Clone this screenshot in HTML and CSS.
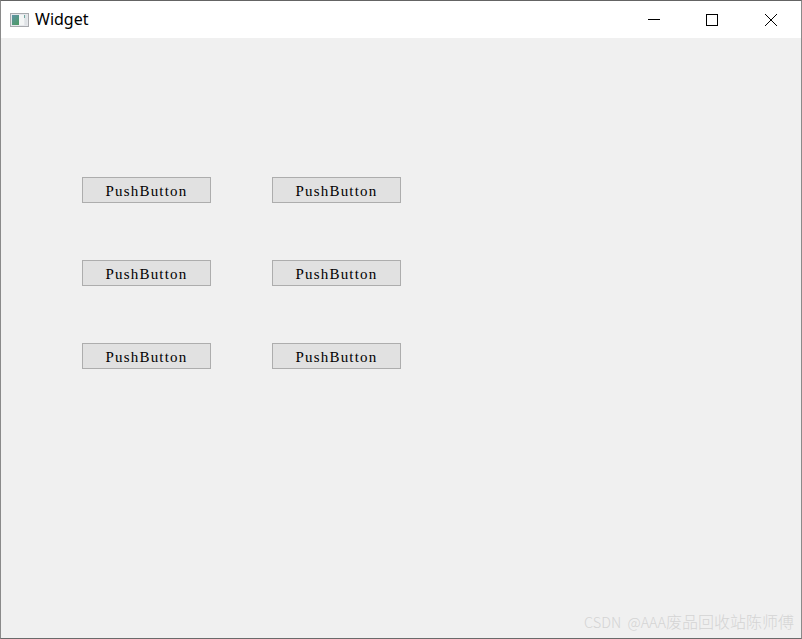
FILE: index.html
```html
<!DOCTYPE html>
<html lang="zh">
<head>
<meta charset="utf-8">
<title>Widget</title>
<link rel="stylesheet" href="styles.css">
</head>
<body>
<div class="window">
  <header class="titlebar">
    <svg class="app-icon" width="20" height="16" viewBox="0 0 20 16">
      <defs>
        <linearGradient id="g" x1="0" y1="0" x2="0.6" y2="1">
          <stop offset="0" stop-color="#5f93a6"/>
          <stop offset="1" stop-color="#4f9a6c"/>
        </linearGradient>
      </defs>
      <rect x="0.5" y="1.5" width="18" height="13" fill="#e6e8ec" stroke="#a8aaae"/>
      <rect x="2" y="3" width="7" height="10" fill="url(#g)"/>
      <rect x="9" y="3" width="5" height="10" fill="#f4f6f6"/>
      <rect x="14" y="3" width="1" height="3" fill="#6fa8a0"/>
      <rect x="15" y="3" width="2" height="10" fill="#dfe3e6"/>
    </svg>
    <span class="title">Widget</span>
    <div class="controls">
      <div class="control">
        <svg width="14" height="14" viewBox="0 0 14 14"><path d="M1 6.5H13" stroke="#000" fill="none"/></svg>
      </div>
      <div class="control">
        <svg width="14" height="14" viewBox="0 0 14 14"><rect x="1.5" y="1.5" width="11" height="11" stroke="#000" fill="none"/></svg>
      </div>
      <div class="control">
        <svg width="14" height="14" viewBox="0 0 14 14"><path d="M1 1L13 13M13 1L1 13" stroke="#000" fill="none"/></svg>
      </div>
    </div>
  </header>
  <main class="content">
    <div class="grid">
      <button class="push">PushButton</button>
      <button class="push">PushButton</button>
      <button class="push">PushButton</button>
      <button class="push">PushButton</button>
      <button class="push">PushButton</button>
      <button class="push">PushButton</button>
    </div>
    <div class="watermark"><span class="watermark-latin">CSDN @AAA</span>废品回收站陈师傅</div>
  </main>
</div>
</body>
</html>
```

FILE: styles.css
```css
html, body {
  margin: 0;
  padding: 0;
  background: #f0f0f0;
}
.window {
  position: relative;
  width: 802px;
  height: 639px;
  box-sizing: border-box;
  border-top: 1px solid #646464;
  border-left: 1px solid #8a8a8a;
  border-right: 1px solid #8a8a8a;
  border-bottom: 1px solid #6a6a6a;
  display: flex;
  flex-direction: column;
  overflow: hidden;
}
.titlebar {
  height: 37px;
  flex: none;
  background: #fff;
  display: flex;
  align-items: center;
  padding-left: 9px;
}
.app-icon {
  flex: none;
  margin-right: 5px;
}
.title {
  font: 16px "Noto Sans", "Liberation Sans", sans-serif;
  color: #000;
  position: relative;
  top: -1px;
}
.controls {
  margin-left: auto;
  display: flex;
  height: 100%;
  padding-right: 1px;
}
.control {
  width: 58.5px;
  display: flex;
  align-items: center;
  justify-content: center;
}
.content {
  position: relative;
  flex: 1;
  background: #f0f0f0;
  padding: 139px 0 0 81px;
}
.grid {
  display: grid;
  grid-template-columns: 129px 129px;
  grid-auto-rows: 26px;
  column-gap: 61px;
  row-gap: 57px;
}
.push {
  margin: 0;
  padding: 2px 0 0;
  box-sizing: border-box;
  border: 1px solid #adadad;
  background: #e1e1e1;
  color: #000;
  font: 15px "Liberation Serif", serif;
  letter-spacing: 1.2px;
  text-align: center;
}
.watermark {
  position: absolute;
  right: 7px;
  bottom: 5px;
  font: 300 16px "Noto Sans CJK SC", "Noto Sans", sans-serif;
  color: #d4d4d4;
  white-space: nowrap;
}
.watermark-latin {
  font-size: 14.5px;
  word-spacing: 3px;
}
```
